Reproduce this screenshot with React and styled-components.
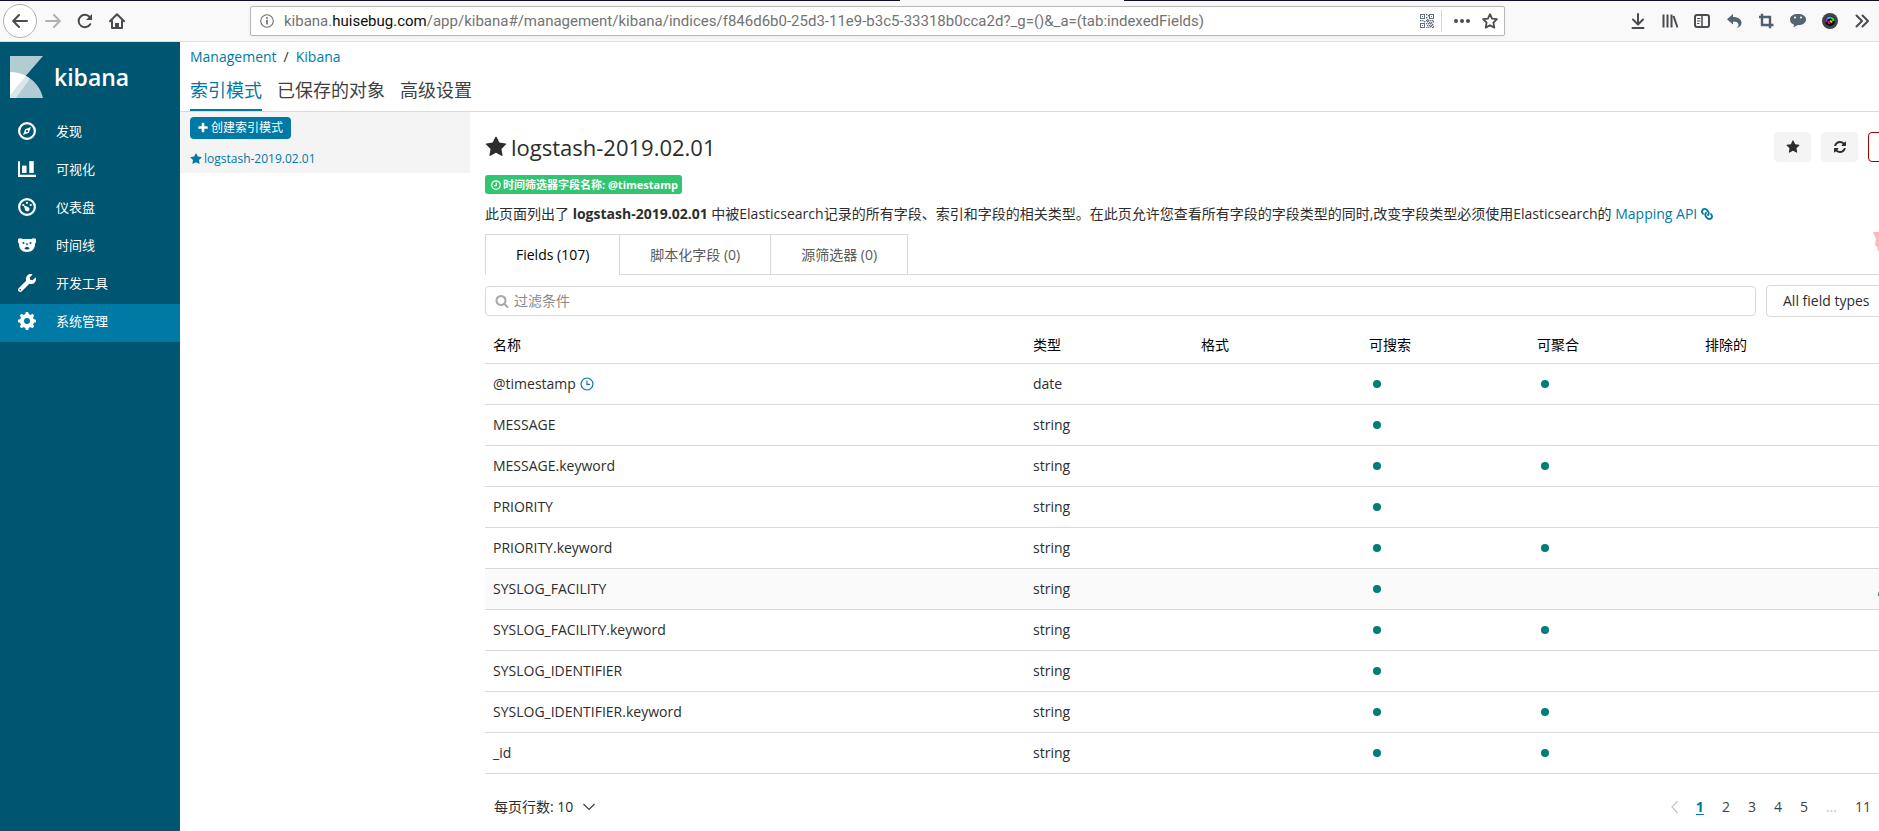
import React from "react";
import styled, { createGlobalStyle, css } from "styled-components";
import { FaLink, FaWrench, FaPencilAlt } from "react-icons/fa";

const Global = createGlobalStyle`
  *, *::before, *::after { box-sizing: border-box; }
  body {
    margin: 0;
    background: #fff;
    color: #2d2d2d;
    font: 14px/20px "Open Sans", "Noto Sans CJK SC", sans-serif;
  }
  button, input, select { font: inherit; color: inherit; }
  button { cursor: pointer; }
  a { color: #0079a5; text-decoration: none; }
  h1, p, ul { margin: 0; padding: 0; }
  svg { display: block; flex: none; }
`;

const Shell = styled.div`
  display: flex;
  flex-direction: column;
  position: relative;
  min-height: 100vh;
  overflow: hidden;
`;

/* ---------- browser toolbar ---------- */

const TabStrip = styled.div`
  display: flex;
  height: 1px;
  background: #f9f9fa;
`;

const StripPart = styled.span`
  flex: ${(p) => p.$grow};
  background: ${(p) => (p.$active ? "#f9f9fa" : "#0f0f28")};
`;

const Browser = styled.header`
  display: flex;
  align-items: center;
  height: 41px;
  padding: 0 9px 0 3px;
  background: #f9f9fa;
  border-bottom: 1px solid #e0e0e1;
`;

const NavGroup = styled.div`
  display: flex;
  align-items: center;
  gap: 16px;
  flex: none;
  width: 247px;
`;

const IconButton = styled.button`
  display: flex;
  align-items: center;
  justify-content: center;
  padding: 0;
  border: 0;
  background: none;
  color: #4a4a4f;
  ${(p) =>
    p.$round &&
    css`
      width: 34px;
      height: 34px;
      margin-right: -8px;
      border: 1px solid #b1b1b3;
      border-radius: 50%;
      background: #fff;
    `}
`;

const UrlBar = styled.div`
  display: flex;
  align-items: center;
  flex: 0 1 1255px;
  min-width: 0;
  height: 30px;
  padding: 0 6px 0 9px;
  border: 1px solid #b8b8b9;
  border-radius: 2px;
  background: #fff;
  box-shadow: 0 1px 4px rgba(0, 0, 0, 0.05);
  color: #737373;
`;

const UrlText = styled.span`
  flex: 1;
  min-width: 0;
  margin-left: 10px;
  overflow: hidden;
  white-space: nowrap;
  font-family: Roboto, sans-serif;
  font-size: 15px;
  b { color: #0c0c0d; font-weight: 400; }
`;

const UrlTools = styled.div`
  display: flex;
  align-items: center;
  gap: 12px;
`;

const Separator = styled.span`
  width: 1px;
  height: 22px;
  margin: 0 0 0 -5px;
  background: #d7d7db;
`;

const Extensions = styled.div`
  display: flex;
  gap: 16px;
  margin-left: auto;
`;

/* ---------- kibana side navigation ---------- */

const Body = styled.div`
  display: flex;
  flex: 1;
`;

const SideNav = styled.nav`
  flex: none;
  width: 180px;
  background: #005571;
  color: #fff;
`;

const Brand = styled.a`
  display: flex;
  align-items: center;
  gap: 11px;
  height: 72px;
  padding: 0 10px 2px;
  color: #fff;
  font: 600 23px/32px "Open Sans", sans-serif;
`;

const NavLink = styled.a`
  display: flex;
  align-items: center;
  gap: 20px;
  height: 38px;
  padding: 0 18px 4px;
  background: ${(p) => (p.$active ? "#0079a5" : "transparent")};
  color: #fff;
  font-size: 13px;
`;

/* ---------- page ---------- */

const Page = styled.div`
  flex: 1;
  min-width: 0;
`;

const TopNav = styled.div`
  height: 70px;
  padding: 5px 10px 0;
  border-bottom: 1px solid #d9d9d9;
`;

const Crumbs = styled.div`
  display: flex;
  gap: 7px;
`;

const SectionTabs = styled.div`
  display: flex;
  gap: 15px;
  margin-top: 7px;
`;

const SectionTab = styled.a`
  height: 37px;
  padding-top: 3px;
  border-bottom: 2px solid ${(p) => (p.$active ? "#0079a5" : "transparent")};
  color: ${(p) => (p.$active ? "#0079a5" : "#3f3f3f")};
  font-size: 18px;
  line-height: 26px;
`;

const Columns = styled.div`
  display: flex;
  align-items: flex-start;
`;

const PatternPanel = styled.aside`
  flex: none;
  width: 290px;
  padding: 5px 10px 4px;
  background: #f4f4f4;
`;

const CreateButton = styled.button`
  display: flex;
  align-items: center;
  gap: 2px;
  height: 22px;
  padding: 0 8px 0 7px;
  border: 0;
  border-radius: 4px;
  background: #0079a5;
  color: #fff;
  font-size: 12px;
`;

const PatternLink = styled.a`
  display: flex;
  align-items: center;
  gap: 2px;
  margin-top: 10px;
  font-size: 12px;
`;

const Main = styled.main`
  flex: 1;
  min-width: 0;
  margin: 19px -26px 0 15px;
`;

const TitleRow = styled.div`
  display: flex;
  align-items: center;
  justify-content: space-between;
  height: 32px;
`;

const Title = styled.h1`
  display: flex;
  align-items: center;
  gap: 4px;
  font-size: 22px;
  line-height: 32px;
  font-weight: 400;
`;

const Actions = styled.div`
  display: flex;
  gap: 10px;
`;

const ActionButton = styled.button`
  display: flex;
  align-items: center;
  justify-content: center;
  width: 37px;
  height: 30px;
  padding: 0;
  border: 1px solid ${(p) => (p.$danger ? "#a30000" : "#f4f4f4")};
  border-radius: 4px;
  background: ${(p) => (p.$danger ? "#fff" : "#f4f4f4")};
  color: ${(p) => (p.$danger ? "#a30000" : "#2d2d2d")};
`;

const Badge = styled.span`
  display: inline-flex;
  align-items: center;
  gap: 2px;
  height: 19px;
  margin-top: 12px;
  padding: 0 4px 0 6px;
  border-radius: 3px;
  background: #31c471;
  color: #fff;
  font-size: 11px;
  font-weight: 700;
  vertical-align: top;
`;

const Intro = styled.p`
  display: flex;
  margin-top: 10px;
  white-space: pre;
  a { display: flex; align-items: center; gap: 4px; }
`;

const FieldTabs = styled.div`
  display: flex;
  margin-top: 10px;
  &::after { content: ""; flex: 1; border-bottom: 1px solid #d9d9d9; }
`;

const FieldTab = styled.button`
  height: 41px;
  margin-right: -1px;
  padding: 0 30px;
  border: 1px solid #d9d9d9;
  border-bottom-color: ${(p) => (p.$active ? "#fff" : "#d9d9d9")};
  background: #fff;
  color: ${(p) => (p.$active ? "#000" : "#5a5a5a")};
`;

const FilterRow = styled.div`
  display: flex;
  align-items: center;
  gap: 10px;
  margin-top: 10px;
`;

const SearchBox = styled.label`
  display: flex;
  align-items: center;
  flex: 1;
  gap: 5px;
  height: 30px;
  padding: 0 9px;
  border: 1px solid #d9d9d9;
  border-radius: 4px;
  color: #a8a8a8;
`;

const SearchInput = styled.input`
  flex: 1;
  min-width: 0;
  padding: 0;
  border: 0;
  outline: 0;
  background: none;
  color: #2d2d2d;
  &::placeholder { color: #8a8a8a; opacity: 1; }
`;

const TypeSelect = styled.select`
  width: 139px;
  height: 32px;
  padding: 0 16px;
  appearance: none;
  border: 1px solid #d9d9d9;
  border-radius: 4px;
  background: #fff;
`;

const Table = styled.table`
  width: 100%;
  margin-top: 6px;
  border-collapse: separate;
  border-spacing: 0;
  table-layout: fixed;
`;

const Col = styled.col`
  width: ${(p) => (p.$w ? `${p.$w}px` : "auto")};
`;

const Th = styled.th`
  height: 41px;
  padding: 3px 8px 0;
  border-bottom: 1px solid #d9d9d9;
  color: #000;
  font-weight: 400;
  text-align: left;
`;

const Row = styled.tr`
  background: ${(p) => (p.$hover ? "#fafafa" : "transparent")};
`;

const Td = styled.td`
  height: 41px;
  padding: 0 ${(p) => (p.$tools ? 13 : 8)}px;
  border-bottom: 1px solid #d9d9d9;
  color: #2d2d2d;
`;

const NameCell = styled.span`
  display: flex;
  align-items: center;
  gap: 4px;
`;

const Dot = styled.span`
  display: block;
  width: 8px;
  height: 8px;
  margin-left: 4px;
  border-radius: 50%;
  background: #017f75;
`;

const EditButton = styled(IconButton)`
  color: #0079a5;
  opacity: ${(p) => (p.$shown ? 1 : 0)};
`;

const Footer = styled.div`
  display: flex;
  align-items: center;
  justify-content: space-between;
  margin-top: 23px;
  padding-left: 9px;
`;

const PageSize = styled.button`
  display: flex;
  align-items: center;
  gap: 10px;
  padding: 0;
  border: 0;
  background: none;
`;

const Pager = styled.div`
  display: flex;
  align-items: center;
`;

const PageButton = styled.button`
  padding: 0 9px;
  border: 0;
  background: none;
  color: ${(p) => (p.$active ? "#0079a5" : p.$muted ? "#c4c4c4" : "#3f3f3f")};
  font-weight: ${(p) => (p.$active ? 700 : 400)};
  text-decoration: ${(p) => (p.$active ? "underline" : "none")};
  text-underline-offset: 2px;
`;

const EdgeSticker = styled.svg`
  position: absolute;
  top: 228px;
  right: 0;
`;

/* ---------- drawings ---------- */

const Glyph = ({ d, size }) => (
  <svg width={size} height={size} viewBox="0 0 1792 1792" fill="currentColor" aria-hidden="true">
    <path d={d} />
  </svg>
);

const STAR =
  "M1728 647q0 22-26 48l-363 354 86 500q1 7 1 20 0 21-10.5 35.5t-30.5 14.5q-19 0-40-12l-449-236-449 236q-22 12-40 12-21 0-31.5-14.5t-10.5-35.5q0-6 2-20l86-500-364-354q-25-27-25-48 0-37 56-46l502-73 225-455q19-41 49-41t49 41l225 455 502 73q56 9 56 46z";
const REFRESH =
  "M1639 1056q0 5-1 7-64 268-268 434.5t-478 166.5q-146 0-282.5-55t-243.5-157l-129 129q-19 19-45 19t-45-19-19-45v-448q0-26 19-45t45-19h448q26 0 45 19t19 45-19 45l-137 137q71 66 161 102t187 36q134 0 250-65t186-179q11-17 53-117 8-23 30-23h192q13 0 22.5 9.5t9.5 22.5zm25-800v448q0 26-19 45t-45 19h-448q-26 0-45-19t-19-45 19-45l138-138q-148-137-349-137-134 0-250 65t-186 179q-11 17-53 117-8 23-30 23h-199q-13 0-22.5-9.5t-9.5-22.5v-7q65-268 270-434.5t480-166.5q146 0 284 55.5t245 156.5l130-129q19-19 45-19t45 19 19 45z";
const PLUS =
  "M1600 736v192q0 40-28 68t-68 28h-416v416q0 40-28 68t-68 28h-192q-40 0-68-28t-28-68v-416h-416q-40 0-68-28t-28-68v-192q0-40 28-68t68-28h416v-416q0-40 28-68t68-28h192q40 0 68 28t28 68v416h416q40 0 68 28t28 68z";
const SEARCH =
  "M1216 832q0-185-131.5-316.5t-316.5-131.5-316.5 131.5-131.5 316.5 131.5 316.5 316.5 131.5 316.5-131.5 131.5-316.5zm512 832q0 52-38 90t-90 38q-54 0-90-38l-343-342q-179 124-399 124-143 0-273.5-55.5t-225-150-150-225-55.5-273.5 55.5-273.5 150-225 225-150 273.5-55.5 273.5 55.5 225 150 150 225 55.5 273.5q0 220-124 399l343 343q37 37 37 90z";

const Svg = ({ size = 16, sw = 2, children }) => (
  <svg width={size} height={size} viewBox="0 0 16 16" fill="none" stroke="currentColor" strokeWidth={sw} strokeLinecap="round" strokeLinejoin="round" aria-hidden="true">
    {children}
  </svg>
);

const BackIcon = () => <Svg><path d="M15 8H1.5M7 2L1.2 8 7 14" /></Svg>;
const ForwardIcon = () => <Svg><path d="M1 8h13.5M9 2l5.8 6L9 14" stroke="#b1b1b3" /></Svg>;
const ReloadIcon = () => (
  <Svg><path d="M13.2 11.2A6.2 6.2 0 1 1 12.6 4" /><path d="M15 1v6H9z" fill="currentColor" stroke="none" /></Svg>
);
const HomeIcon = () => (
  <Svg><path d="M1 8.2L8 1.2l7 7M3 8v7h10V8" /><path d="M6 15v-5h4v5z" fill="currentColor" stroke="none" /></Svg>
);
const InfoIcon = () => (
  <Svg size={14} sw={1.3}><circle cx="8" cy="8" r="7.2" /><path d="M8 7.2v4" strokeWidth="2" /><circle cx="8" cy="4.5" r="1.1" fill="currentColor" stroke="none" /></Svg>
);

const QR_CELLS = [
  [6, 0], [8, 1], [6, 3], [7, 5], [0, 6], [2, 6], [4, 7], [6, 6], [8, 6], [10, 6], [12, 6], [13, 7],
  [7, 7], [9, 8], [11, 8], [6, 9], [8, 9], [10, 9], [12, 10], [7, 11], [9, 11], [11, 11], [13, 12], [6, 13], [8, 13], [10, 12], [12, 13],
];
const QrIcon = () => (
  <svg width="14" height="14" viewBox="0 0 14 14" fill="#66717f" aria-hidden="true">
    {[[0, 0], [9, 0], [0, 9]].map(([x, y]) => (
      <g key={`${x}-${y}`}>
        <rect x={x + 0.5} y={y + 0.5} width="4" height="4" fill="none" stroke="#66717f" />
        <rect x={x + 2} y={y + 2} width="1" height="1" />
      </g>
    ))}
    {QR_CELLS.map(([x, y]) => <rect key={`${x}.${y}`} x={x} y={y} width="1.4" height="1.4" />)}
  </svg>
);
const MoreIcon = () => (
  <Svg><g fill="currentColor" stroke="none"><circle cx="2" cy="8" r="2" /><circle cx="8" cy="8" r="2" /><circle cx="14" cy="8" r="2" /></g></Svg>
);
const StarOutline = () => (
  <Svg sw={1.8}><path d="M8 1.2l2.1 4.4 4.8.6-3.5 3.4.9 5L8 12.2l-4.3 2.4.9-5L1.1 6.2l4.8-.6z" /></Svg>
);
const DownloadIcon = () => <Svg><path d="M8 1v10M3 6.5L8 11.5l5-5M2.5 15h11" /></Svg>;
const LibraryIcon = () => <Svg><path d="M1.5 1.5v13M5.5 1.5v13M9.5 1.5v13M11.500 3l4 11.500" strokeLinecap="butt" /></Svg>;
const SidebarIcon = () => (
  <Svg><rect x="1" y="2" width="14" height="12" rx="2" /><path d="M8 2v12" strokeWidth="1.5" /><path d="M3.5 5.5H6M3.5 8H6M3.5 10.5H5" strokeWidth="1" /></Svg>
);
const UndoIcon = () => (
  <svg width="16" height="16" viewBox="0 0 16 16" fill="#536473" aria-hidden="true">
    <path d="M1 6.200L7 1v3c5.500 0 8.500 2.600 8.500 6 0 2.600-2 4.400-5 5 1.900-1.400 2.300-2.600 1.900-3.800C11.800 9.300 10 8.600 7 8.600v3z" />
  </svg>
);
const CropIcon = () => <Svg sw={2.4}><g stroke="#4d5f70" strokeLinecap="butt" strokeLinejoin="miter"><path d="M4 0.800V12h11.500M1 4h11v11.200" /></g></Svg>;
const ChatIcon = () => (
  <svg width="16" height="16" viewBox="0 0 16 16" aria-hidden="true">
    <path d="M8 1c4.600 0 8 2 8 5.400S12.800 12 8.500 12.100C6.500 12.200 5.500 14 3 14.300c.9-.9 1.200-2 .8-2.900C1.500 10.600 0 9 0 6.400 0 3 3.400 1 8 1z" fill="#536473" />
    <circle cx="5" cy="4.600" r="1" fill="#fff" /><circle cx="11" cy="4.600" r="1" fill="#fff" />
  </svg>
);
const LensIcon = () => (
  <svg width="16" height="16" viewBox="0 0 16 16" fill="none" aria-hidden="true">
    <circle cx="8" cy="8" r="8" fill="#444448" /><circle cx="8" cy="8" r="5" fill="#08080c" />
    <path d="M4.500 9A3.500 3.500 0 0 1 6 5" stroke="#9d2be0" strokeWidth="2" />
    <path d="M5.500 5.500A3.500 3.500 0 0 1 9 4.600" stroke="#21c3e8" strokeWidth="2" />
    <path d="M9 4.600A3.500 3.500 0 0 1 11.500 8" stroke="#45d94a" strokeWidth="2" />
    <path d="M8 7.500l2 2" stroke="#f1b51c" strokeWidth="2" /><path d="M6 8.500l1.500 2.500" stroke="#e82058" strokeWidth="1.600" />
  </svg>
);
const OverflowIcon = () => <Svg><path d="M2.500 2.500L8 8l-5.500 5.500M8.500 2.500L14 8l-5.500 5.500" /></Svg>;

const KibanaMark = () => (
  <svg width="33" height="42" viewBox="0 0 33 42" aria-hidden="true">
    <path d="M0 0h33L0 38z" fill="#b3ccd4" />
    <path d="M0 16c14 0 29 9 33 26H0z" fill="#b3ccd4" />
    <path d="M16 20l4 2.500L6 42H0v-3l5-5z" fill="#d9e6ea" />
    <path d="M0 16c6 0 11 1.500 16 4L0 39.500z" fill="#fff" />
  </svg>
);

const CompassIcon = () => (
  <Svg size={18}><circle cx="8" cy="8" r="7" /><path d="M11.600 4.400L9.600 9.600 4.400 11.600l2-5.200z" fill="currentColor" stroke="none" /><circle cx="8" cy="8" r="1" fill="#005571" stroke="none" /></Svg>
);
const ChartIcon = () => (
  <Svg size={18}><g fill="currentColor" stroke="none"><path d="M0 1h1.800v12.200H16V15H0z" /><rect x="3.600" y="5" width="4" height="6.500" /><rect x="10" y="1" width="4" height="10.500" /></g></Svg>
);
const DashboardIcon = () => (
  <Svg size={18}>
    <circle cx="8" cy="8" r="7" />
    <g fill="currentColor" stroke="none"><circle cx="8" cy="4.300" r="1" /><circle cx="4.700" cy="6.300" r="1" /><circle cx="11.300" cy="6.300" r="1" /><path d="M5 6.500l4 1.500a2 2 0 1 1-2.600 2.600z" /></g>
  </Svg>
);
const BearIcon = () => (
  <svg width="18" height="18" viewBox="0 0 18 18" aria-hidden="true">
    <path d="M0 3c1.500-1.200 3.500-1 4.500 0h9c1-1 3-1.200 4.500 0v3.500l-1 1c.3 5-3 8.500-8 8.500S.7 12.500 1 7.500l-1-1z" fill="#fff" />
    <circle cx="5.500" cy="7" r="1" fill="#005571" /><circle cx="12.500" cy="7" r="1" fill="#005571" />
    <path d="M7.500 7.500h3L9 9.500zM6.500 12.500c.4-2 4.600-2 5 0-.8 1.400-4.200 1.400-5 0z" fill="#005571" />
  </svg>
);
const GearIcon = () => (
  <svg width="18" height="18" viewBox="0 0 18 18" aria-hidden="true">
    <circle cx="9" cy="9" r="5" fill="none" stroke="currentColor" strokeWidth="4" />
    {[0, 45, 90, 135, 180, 225, 270, 315].map((a) => (
      <path key={a} d="M7 3l.8-3h2.400L11 3z" fill="currentColor" transform={`rotate(${a} 9 9)`} />
    ))}
  </svg>
);
const ClockIcon = ({ size, sw, hand }) => (
  <Svg size={size} sw={sw}><circle cx="8" cy="8" r="6.800" /><path d={hand} strokeLinecap="butt" strokeLinejoin="miter" /></Svg>
);
const ChevronDown = () => (
  <svg width="12" height="12" viewBox="0 0 12 12" fill="none" stroke="#3f3f3f" strokeWidth="1.200" aria-hidden="true"><path d="M.5 3L6 8.500 11.500 3" /></svg>
);
const Chevron = ({ d }) => (
  <svg width="7" height="14" viewBox="0 0 7 14" fill="none" stroke="currentColor" strokeWidth="1.200" aria-hidden="true"><path d={d} /></svg>
);

/* ---------- data ---------- */

const NAV = [
  ["发现", <CompassIcon />],
  ["可视化", <ChartIcon />],
  ["仪表盘", <DashboardIcon />],
  ["时间线", <BearIcon />],
  ["开发工具", <FaWrench size={18} />],
  ["系统管理", <GearIcon />],
];

const HEADERS = ["名称", "类型", "格式", "可搜索", "可聚合", "排除的", ""];

const FIELDS = [
  { name: "@timestamp", type: "date", agg: true, time: true },
  { name: "MESSAGE", type: "string" },
  { name: "MESSAGE.keyword", type: "string", agg: true },
  { name: "PRIORITY", type: "string" },
  { name: "PRIORITY.keyword", type: "string", agg: true },
  { name: "SYSLOG_FACILITY", type: "string", hover: true },
  { name: "SYSLOG_FACILITY.keyword", type: "string", agg: true },
  { name: "SYSLOG_IDENTIFIER", type: "string" },
  { name: "SYSLOG_IDENTIFIER.keyword", type: "string", agg: true },
  { name: "_id", type: "string", agg: true },
];

const EXTENSIONS = [
  ["Downloads", DownloadIcon],
  ["Library", LibraryIcon],
  ["Sidebars", SidebarIcon],
  ["Undo", UndoIcon],
  ["Crop", CropIcon],
  ["Chat", ChatIcon],
  ["Lens", LensIcon],
  ["More tools", OverflowIcon],
];

export default function App() {
  return (
    <Shell>
      <Global />
      <TabStrip>
        <StripPart $grow={900} />
        <StripPart $grow={224} $active />
        <StripPart $grow={755} />
      </TabStrip>
      <Browser>
        <NavGroup>
          <IconButton $round aria-label="Back"><BackIcon /></IconButton>
          <IconButton aria-label="Forward"><ForwardIcon /></IconButton>
          <IconButton aria-label="Reload"><ReloadIcon /></IconButton>
          <IconButton aria-label="Home"><HomeIcon /></IconButton>
        </NavGroup>
        <UrlBar>
          <InfoIcon />
          <UrlText>
            kibana.<b>huisebug.com</b>/app/kibana#/management/kibana/indices/f846d6b0-25d3-11e9-b3c5-33318b0cca2d?_g=()&amp;_a=(tab:indexedFields)
          </UrlText>
          <UrlTools>
            <IconButton aria-label="QR code"><QrIcon /></IconButton>
            <Separator />
            <IconButton aria-label="Page actions"><MoreIcon /></IconButton>
            <IconButton aria-label="Bookmark"><StarOutline /></IconButton>
          </UrlTools>
        </UrlBar>
        <Extensions>
          {EXTENSIONS.map(([label, Icon]) => (
            <IconButton key={label} aria-label={label}><Icon /></IconButton>
          ))}
        </Extensions>
      </Browser>
      <Body>
        <SideNav>
          <Brand href="#"><KibanaMark />kibana</Brand>
          {NAV.map(([label, icon], i) => (
            <NavLink key={label} href="#" $active={i === NAV.length - 1}>{icon}{label}</NavLink>
          ))}
        </SideNav>
        <Page>
          <TopNav>
            <Crumbs><a href="#">Management</a><span>/</span><a href="#">Kibana</a></Crumbs>
            <SectionTabs>
              <SectionTab href="#" $active>索引模式</SectionTab>
              <SectionTab href="#">已保存的对象</SectionTab>
              <SectionTab href="#">高级设置</SectionTab>
            </SectionTabs>
          </TopNav>
          <Columns>
            <PatternPanel>
              <CreateButton><Glyph d={PLUS} size={12} />创建索引模式</CreateButton>
              <PatternLink href="#"><Glyph d={STAR} size={12} />logstash-2019.02.01</PatternLink>
            </PatternPanel>
            <Main>
              <TitleRow>
                <Title><Glyph d={STAR} size={22} />logstash-2019.02.01</Title>
                <Actions>
                  <ActionButton aria-label="Set as default"><Glyph d={STAR} size={14} /></ActionButton>
                  <ActionButton aria-label="Refresh"><Glyph d={REFRESH} size={14} /></ActionButton>
                  <ActionButton $danger aria-label="Delete" />
                </Actions>
              </TitleRow>
              <Badge><ClockIcon size={10} sw={2} hand="M8.500 4v5H5" />时间筛选器字段名称: @timestamp</Badge>
              <Intro>
                此页面列出了 <strong>logstash-2019.02.01</strong> 中被Elasticsearch记录的所有字段、索引和字段的相关类型。在此页允许您查看所有字段的字段类型的同时,改变字段类型必须使用Elasticsearch的 <a href="#">Mapping API<FaLink size={12} transform="scale(-1 1)" /></a>
              </Intro>
              <FieldTabs>
                <FieldTab $active>Fields (107)</FieldTab>
                <FieldTab>脚本化字段 (0)</FieldTab>
                <FieldTab>源筛选器 (0)</FieldTab>
              </FieldTabs>
              <FilterRow>
                <SearchBox>
                  <Glyph d={SEARCH} size={14} />
                  <SearchInput type="text" placeholder="过滤条件" aria-label="过滤条件" />
                </SearchBox>
                <TypeSelect aria-label="Field type"><option>All field types</option></TypeSelect>
              </FilterRow>
              <Table>
                <colgroup>
                  <Col /><Col $w={168} /><Col $w={168} /><Col $w={168} /><Col $w={168} /><Col $w={168} /><Col $w={40} />
                </colgroup>
                <thead>
                  <tr>{HEADERS.map((h) => <Th key={h}>{h}</Th>)}</tr>
                </thead>
                <tbody>
                  {FIELDS.map((f) => (
                    <Row key={f.name} $hover={f.hover}>
                      <Td>
                        <NameCell>
                          {f.name}
                          {f.time && <a href="#" aria-label="Time field"><ClockIcon size={14} sw={1.3} hand="M8 4v4.500h3.500" /></a>}
                        </NameCell>
                      </Td>
                      <Td>{f.type}</Td>
                      <Td />
                      <Td><Dot /></Td>
                      <Td>{f.agg && <Dot />}</Td>
                      <Td />
                      <Td $tools><EditButton $shown={f.hover} aria-label="Edit"><FaPencilAlt size={14} /></EditButton></Td>
                    </Row>
                  ))}
                </tbody>
              </Table>
              <Footer>
                <PageSize>每页行数: 10<ChevronDown /></PageSize>
                <Pager>
                  <PageButton $muted aria-label="Previous"><Chevron d="M6.500 1L1 7l5.500 6" /></PageButton>
                  <PageButton $active>1</PageButton>
                  <PageButton>2</PageButton>
                  <PageButton>3</PageButton>
                  <PageButton>4</PageButton>
                  <PageButton>5</PageButton>
                  <PageButton $muted>...</PageButton>
                  <PageButton>11</PageButton>
                  <PageButton aria-label="Next"><Chevron d="M.5 1L6 7l-5.500 6" /></PageButton>
                </Pager>
              </Footer>
            </Main>
          </Columns>
        </Page>
      </Body>
      <EdgeSticker width="6" height="26" viewBox="0 0 6 26" aria-hidden="true">
        <path d="M0 4h6v19l-2-1 1-2-3-3 1-6z" fill="#f7a9a9" opacity="0.800" />
      </EdgeSticker>
    </Shell>
  );
}
